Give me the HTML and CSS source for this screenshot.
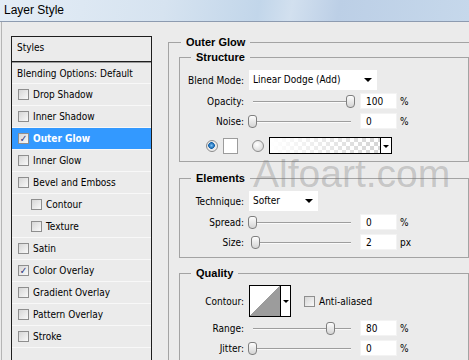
FILE: index.html
```html
<!DOCTYPE html>
<html lang="en">
<head>
  <meta charset="UTF-8">
  <title>Layer Style</title>
  <link rel="stylesheet" href="styles.css">
</head>
<body>

<div class="window">
  <div class="titlebar">Layer Style</div>

  <div class="dialog">
    <div class="styles-list">
      <div class="list-head">Styles</div>
      <div class="list-row first">Blending Options: Default</div>
      <div class="list-row"><span class="check"></span>Drop Shadow</div>
      <div class="list-row"><span class="check"></span>Inner Shadow</div>
      <div class="list-row selected"><span class="check">✓</span>Outer Glow</div>
      <div class="list-row"><span class="check"></span>Inner Glow</div>
      <div class="list-row"><span class="check"></span>Bevel and Emboss</div>
      <div class="list-row sub"><span class="check"></span>Contour</div>
      <div class="list-row sub"><span class="check"></span>Texture</div>
      <div class="list-row"><span class="check"></span>Satin</div>
      <div class="list-row"><span class="check">✓</span>Color Overlay</div>
      <div class="list-row"><span class="check"></span>Gradient Overlay</div>
      <div class="list-row"><span class="check"></span>Pattern Overlay</div>
      <div class="list-row"><span class="check"></span>Stroke</div>
    </div>

    <div class="options">
      <fieldset class="group outer">
        <legend>Outer Glow</legend>

        <fieldset class="group inner structure">
          <legend>Structure</legend>
          <div class="field tall">
            <label>Blend Mode:</label>
            <div class="select blend">Linear Dodge (Add)</div>
          </div>
          <div class="field">
            <label>Opacity:</label>
            <div class="slider"><span class="thumb" style="left: 100%"></span></div>
            <div class="num">100</div>
            <span class="unit">%</span>
          </div>
          <div class="field">
            <label>Noise:</label>
            <div class="slider"><span class="thumb" style="left: 0%"></span></div>
            <div class="num">0</div>
            <span class="unit">%</span>
          </div>
          <div class="color-row">
            <span class="radio on"></span>
            <span class="swatch"></span>
            <span class="radio second"></span>
            <div class="gradient">
              <span class="ramp"></span>
              <span class="drop"></span>
            </div>
          </div>
        </fieldset>

        <fieldset class="group inner">
          <legend>Elements</legend>
          <div class="field tall">
            <label>Technique:</label>
            <div class="select technique">Softer</div>
          </div>
          <div class="field">
            <label>Spread:</label>
            <div class="slider"><span class="thumb" style="left: 0%"></span></div>
            <div class="num">0</div>
            <span class="unit">%</span>
          </div>
          <div class="field">
            <label>Size:</label>
            <div class="slider"><span class="thumb" style="left: 3%"></span></div>
            <div class="num">2</div>
            <span class="unit">px</span>
          </div>
        </fieldset>

        <fieldset class="group inner quality">
          <legend>Quality</legend>
          <div class="field contour-row">
            <label>Contour:</label>
            <div class="contour">
              <span class="curve"></span>
              <span class="drop"></span>
            </div>
            <span class="check anti"></span>
            <span>Anti-aliased</span>
          </div>
          <div class="field">
            <label>Range:</label>
            <div class="slider"><span class="thumb" style="left: 80%"></span></div>
            <div class="num">80</div>
            <span class="unit">%</span>
          </div>
          <div class="field">
            <label>Jitter:</label>
            <div class="slider"><span class="thumb" style="left: 0%"></span></div>
            <div class="num">0</div>
            <span class="unit">%</span>
          </div>
        </fieldset>
      </fieldset>
    </div>
  </div>

  <div class="watermark">Alfoart.com</div>
</div>

</body>
</html>
```

FILE: styles.css
```css
body {
  margin: 0;
  background: #ebebeb;
  color: #000;
  font-family: "DejaVu Sans Condensed", "Liberation Sans", sans-serif;
  font-size: 10px;
}

.window {
  position: relative;
  width: 469px;
  height: 360px;
  overflow: hidden;
}

.titlebar {
  height: 21px;
  line-height: 21px;
  padding-left: 4px;
  font-family: "Liberation Sans", sans-serif;
  font-size: 12px;
  border-bottom: 1px solid #8d9bb0;
  background: linear-gradient(100deg, #e4edf6 0%, #d6e3f0 35%, #c2d6ea 55%, #d2e0ef 62%, #bccfe6 72%, #c6d8eb 100%);
}

.dialog {
  display: flex;
  align-items: flex-start;
  height: 400px;
  margin-left: 1px;
  padding: 14px 0 0 9px;
  border-left: 1px solid #b5b5b5;
}

/* left list */
.styles-list {
  flex-shrink: 0;
  width: 141px;
  height: 340px;
  box-sizing: border-box;
  border: 1px solid #1e1e1e;
}

.list-head {
  height: 24px;
  line-height: 22px;
  padding-left: 5px;
  border-bottom: 1px solid #1e1e1e;
}

.list-row {
  display: flex;
  align-items: center;
  height: 21px;
  padding-left: 6px;
  border-bottom: 1px solid #f8f8f8;
}

.list-row.first {
  height: 20px;
  padding-left: 5px;
  border-top: 1px solid #9a9a9a;
}

.list-row.sub { padding-left: 19px; }

.list-row.selected {
  background: #3399ff;
  color: #fff;
  font-weight: bold;
}

.check {
  flex-shrink: 0;
  width: 11px;
  height: 11px;
  box-sizing: border-box;
  margin-right: 4px;
  border: 1px solid #8e8e8e;
  background: linear-gradient(135deg, #d6d6d6, #f9f9f9);
  color: #28327c;
  font-size: 10px;
  font-weight: normal;
  line-height: 9px;
  text-align: center;
}

/* right side */
.options {
  flex: 1;
  margin-left: 16px;
}

.group {
  margin: 0;
  padding: 6px 0 7px 0;
  min-width: 0;
  border: 1px solid #a3a3a3;
}

.group legend {
  margin-left: 11px;
  padding: 0 5px;
  font-family: "Liberation Sans", sans-serif;
  font-weight: bold;
  font-size: 11px;
  line-height: 13px;
}

.group.outer {
  padding: 0 0 0 10px;
  border-right: none;
  border-bottom: none;
}

.group.outer > legend { margin-left: 2px; }

.inner {
  width: 290px;
  box-sizing: border-box;
  margin-top: 10px;
}

.structure { margin-top: 2px; }
.quality { margin-top: 9px; padding-top: 5px; }

.field {
  display: flex;
  align-items: center;
  height: 16px;
  margin-top: 4px;
}

.field.tall {
  height: 20px;
  margin-top: 0;
}

.tall + .field { margin-top: 3px; }

.field label {
  flex-shrink: 0;
  width: 64px;
  margin-right: 5px;
  text-align: right;
}

.select {
  position: relative;
  height: 20px;
  line-height: 20px;
  padding-left: 4px;
  box-sizing: border-box;
  background: #fff;
}

.select.blend { width: 128px; }
.select.technique { width: 69px; }

.select::after {
  content: "";
  position: absolute;
  right: 5px;
  top: 8px;
  border-left: 4px solid transparent;
  border-right: 4px solid transparent;
  border-top: 4px solid #000;
}

.slider {
  position: relative;
  width: 98px;
  height: 13px;
  margin: 0 9px 0 4px;
}

.slider::before {
  content: "";
  position: absolute;
  left: 0;
  right: 0;
  top: 6px;
  height: 1px;
  background: #9d9d9d;
  box-shadow: 0 1px 0 #fafafa;
}

.thumb {
  position: absolute;
  top: 0;
  width: 9px;
  height: 13px;
  margin-left: -5px;
  box-sizing: border-box;
  border: 1px solid #7f7f7f;
  border-radius: 3px 3px 4px 4px;
  background: linear-gradient(#fdfdfd, #d4d4d4);
}

.num {
  width: 37px;
  height: 16px;
  line-height: 15px;
  padding-left: 5px;
  box-sizing: border-box;
  background: #fff;
  border: 1px solid #f3f3f3;
}

.unit { margin-left: 3px; }

.color-row {
  display: flex;
  align-items: center;
  height: 17px;
  margin-top: 8px;
  padding-left: 26px;
}

.radio {
  width: 12px;
  height: 12px;
  box-sizing: border-box;
  border: 1px solid #8c8c8c;
  border-radius: 50%;
  background: radial-gradient(circle at 40% 35%, #fff, #d0d0d0);
}

.radio.on {
  background: radial-gradient(circle at 45% 45%, #7cc4fa 0, #0e5ea8 3px, #e6e6e6 3.6px, #fbfbfb 100%);
}

.radio.second { margin-left: 14px; }

.swatch {
  width: 15px;
  height: 16px;
  margin-left: 5px;
  box-sizing: border-box;
  border: 1px solid #9c9c9c;
  background: #fff;
}

.gradient {
  display: flex;
  width: 123px;
  height: 17px;
  margin-left: 5px;
  box-sizing: border-box;
  border: 1px solid #000;
}

.gradient .ramp {
  flex: 1;
  background:
    linear-gradient(to right, #fff, rgba(255, 255, 255, 0)),
    repeating-conic-gradient(#d4d4d4 0 25%, #fff 0 50%) 0 0 / 8px 8px;
}

.drop {
  position: relative;
  width: 10px;
  border-left: 1px solid #000;
  background: #fff;
}

.drop::after {
  content: "";
  position: absolute;
  left: 2px;
  top: 50%;
  margin-top: -1px;
  border-left: 3px solid transparent;
  border-right: 3px solid transparent;
  border-top: 3px solid #000;
}

.field.contour-row {
  height: 32px;
  margin-top: 0;
}

.contour-row + .field { margin-top: 3px; }

.contour {
  display: flex;
  width: 42px;
  height: 32px;
  box-sizing: border-box;
  border: 1px solid #000;
}

.contour .curve {
  width: 30px;
  background: linear-gradient(to top left, #9c9c9c 50%, #fff 50%);
}

.contour .drop { flex: 1; }

.check.anti { margin-left: 13px; }

.watermark {
  position: absolute;
  left: 253px;
  top: 154px;
  font-family: "Liberation Sans", sans-serif;
  font-size: 39px;
  line-height: 39px;
  color: rgba(110, 110, 110, 0.3);
  pointer-events: none;
}
```
